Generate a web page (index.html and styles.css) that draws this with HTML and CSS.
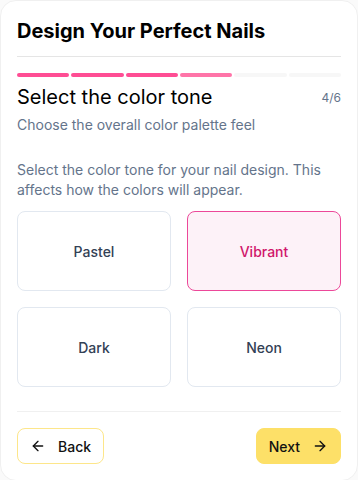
FILE: index.html
```html
<html>
<head>
    <title>Design Your Perfect Nails</title>
    <link rel="stylesheet" href="styles.css">
</head>
<body>
    <div class="card">
        <h1 class="title">Design Your Perfect Nails</h1>
        <div class="divider"></div>

        <div class="progress">
            <div class="step done"></div>
            <div class="step done"></div>
            <div class="step done"></div>
            <div class="step current"></div>
            <div class="step"></div>
            <div class="step"></div>
        </div>

        <div class="step-head">
            <h2>Select the color tone</h2>
            <span class="count">4/6</span>
        </div>
        <p class="subtitle">Choose the overall color palette feel</p>

        <p class="hint">Select the color tone for your nail design. This affects how the colors will appear.</p>

        <div class="options">
            <button class="option">Pastel</button>
            <button class="option selected">Vibrant</button>
            <button class="option">Dark</button>
            <button class="option">Neon</button>
        </div>

        <div class="divider bottom"></div>

        <div class="nav">
            <button class="btn btn-back">
                <svg width="16" height="16" viewBox="0 0 24 24" fill="none" stroke="currentColor" stroke-width="2" stroke-linecap="round" stroke-linejoin="round"><path d="M19 12H5"/><path d="M12 19l-7-7 7-7"/></svg>
                Back
            </button>
            <button class="btn btn-next">
                Next
                <svg width="16" height="16" viewBox="0 0 24 24" fill="none" stroke="currentColor" stroke-width="2" stroke-linecap="round" stroke-linejoin="round"><path d="M5 12h14"/><path d="M12 5l7 7-7 7"/></svg>
            </button>
        </div>
    </div>
</body>
</html>
```

FILE: styles.css
```css
body {
    margin: 0;
    background-color: #fafafa;
    font-family: Inter, "Noto Sans", sans-serif;
}
.card {
    width: 358px;
    box-sizing: border-box;
    padding: 16px;
    background-color: #fff;
    border: 1px solid #f0f0f0;
    border-radius: 16px;
}
.title {
    margin: 0;
    font-size: 20px;
    font-weight: 700;
    color: #000;
    line-height: 28px;
}
.divider {
    height: 1px;
    background-color: #e5e5e5;
    margin-top: 11px;
}
.progress {
    display: flex;
    gap: 2px;
    margin-top: 16px;
}
.step {
    flex: 1;
    height: 4px;
    border-radius: 2px;
    background-color: #f7f7f7;
}
.step.done {
    background-color: #ff4d94;
}
.step.current {
    background-color: #ff74a8;
}
.step-head {
    display: flex;
    justify-content: space-between;
    align-items: center;
    margin-top: 6px;
}
.step-head h2 {
    margin: 0;
    font-size: 20px;
    font-weight: 400;
    color: #000;
    line-height: 28px;
}
.count {
    font-size: 12px;
    color: #64748b;
}
.subtitle {
    margin: 4px 0 0;
    font-size: 14px;
    color: #64748b;
    line-height: 20px;
}
.hint {
    margin: 25px 0 0;
    font-size: 14px;
    color: #64748b;
    line-height: 20px;
}
.options {
    display: grid;
    grid-template-columns: 1fr 1fr;
    gap: 16px;
    margin-top: 11px;
}
.option {
    height: 80px;
    background-color: #fff;
    border: 1px solid #e2e8f0;
    border-radius: 8px;
    font-family: Inter, "Noto Sans", sans-serif;
    font-size: 14px;
    font-weight: 500;
    color: #334155;
    cursor: pointer;
}
.option.selected {
    background-color: #fdf2f8;
    border-color: #ec4899;
    color: #d0176b;
}
.divider.bottom {
    margin-top: 24px;
    background-color: #f0f0f0;
}
.nav {
    display: flex;
    justify-content: space-between;
    margin-top: 16px;
}
.btn {
    display: flex;
    align-items: center;
    gap: 12px;
    height: 36px;
    padding: 0 12px;
    border-radius: 8px;
    font-family: Inter, "Noto Sans", sans-serif;
    font-size: 14px;
    font-weight: 500;
    color: #111;
    cursor: pointer;
}
.btn-back {
    background-color: #fff;
    border: 1px solid #fde68a;
}
.btn-next {
    background-color: #fde068;
    border: 1px solid #fde068;
}
```
